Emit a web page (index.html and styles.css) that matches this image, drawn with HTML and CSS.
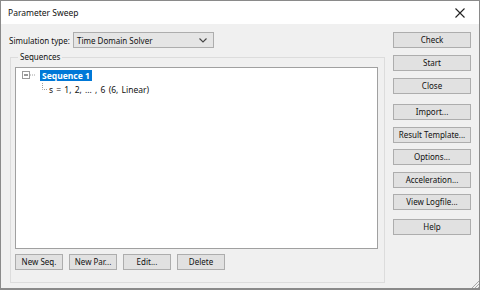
FILE: index.html
```html
<!DOCTYPE html>
<html>
<head>
<meta charset="utf-8">
<link rel="stylesheet" href="styles.css">
</head>
<body>
<div class="window">
  <div class="titlebar">
    <span class="title">Parameter Sweep</span>
    <svg class="close" width="10" height="10" viewBox="0 0 10 10"><path d="M0.5 0.5 L9.5 9.5 M9.5 0.5 L0.5 9.5" stroke="#222" stroke-width="1.1" fill="none"/></svg>
  </div>
  <div class="client">
    <div class="leftcol">
      <div class="simrow">
        <span class="label">Simulation type:</span>
        <div class="combo">
          <span>Time Domain Solver</span>
          <svg width="8" height="5" viewBox="0 0 8 5"><path d="M0.5 0.5 L4 4 L7.5 0.5" stroke="#444" stroke-width="1.1" fill="none"/></svg>
        </div>
      </div>
      <fieldset class="group">
        <legend>Sequences</legend>
        <div class="tree">
          <div class="node root">
            <svg class="expander" width="13" height="9" viewBox="0 0 13 9"><rect x="0.5" y="0.5" width="7" height="7" fill="#fff" stroke="#9a9a9a"/><path d="M2 4 H6" stroke="#333"/><path d="M8 4 H13" stroke="#a0a0a0" stroke-dasharray="1 1"/></svg>
            <span class="sel">Sequence 1</span>
          </div>
          <div class="node child">
            <svg class="branch" width="6" height="9" viewBox="0 0 6 9"><path d="M0.5 0 V6.5 H6" stroke="#a0a0a0" fill="none" stroke-dasharray="1 1"/></svg>
            <span class="childtext">s = 1, 2, ... , 6 (6, Linear)</span>
          </div>
        </div>
        <div class="bottombtns">
          <button class="btn">New Seq.</button>
          <button class="btn">New Par...</button>
          <button class="btn">Edit...</button>
          <button class="btn">Delete</button>
        </div>
      </fieldset>
    </div>
    <div class="rightcol">
      <div class="bgroup g1">
        <button class="btn">Check</button>
        <button class="btn">Start</button>
        <button class="btn">Close</button>
      </div>
      <div class="bgroup g2">
        <button class="btn">Import...</button>
        <button class="btn">Result Template...</button>
        <button class="btn">Options...</button>
        <button class="btn">Acceleration...</button>
        <button class="btn">View Logfile...</button>
      </div>
      <div class="bgroup g3">
        <button class="btn">Help</button>
      </div>
    </div>
    <svg class="grip" width="8" height="8" viewBox="0 0 8 8"><path d="M8 1 L1 8 M8 4 L4 8 M8 7 L7 8" stroke="#a8a8a8" stroke-width="1"/></svg>
  </div>
</div>
</body>
</html>
```
FILE: styles.css
```css
* { box-sizing: border-box; }
html, body { margin: 0; padding: 0; }
body {
  width: 480px;
  height: 290px;
  overflow: hidden;
  font-family: "Noto Sans", "Open Sans", sans-serif;
  font-size: 8px;
  color: #111;
  background: #f0f0f0;
}
.window {
  width: 480px;
  height: 290px;
  border: 1px solid #8a8a8a;
  border-bottom-width: 2px;
  display: flex;
  flex-direction: column;
  background: #f0f0f0;
}
.titlebar {
  height: 23px;
  background: #fff;
  display: flex;
  align-items: center;
  justify-content: space-between;
  padding: 0 14px 0 7px;
  flex: none;
}
.title { font-size: 8.5px; color: #111; }
.close { display: block; }
.client {
  flex: 1;
  display: flex;
  position: relative;
  padding: 8px 0 0 8px;
}
.leftcol {
  width: 376px;
  display: flex;
  flex-direction: column;
}
.simrow {
  display: flex;
  align-items: center;
  height: 16px;
}
.label { width: 64px; flex: none; white-space: nowrap; }
.combo {
  width: 141px;
  height: 16px;
  border: 1px solid #adadad;
  background: #e5e5e5;
  display: flex;
  align-items: center;
  justify-content: space-between;
  padding: 0 6px 0 3px;
  flex: none;
}
.group {
  margin: 3px 0 0 1px;
  border: 1px solid #dcdcdc;
  padding: 4px 6px 7px 4px;
  height: 232px;
  min-width: 0;
  display: flex;
  flex-direction: column;
}
.group legend {
  padding: 0 2px;
  margin-left: 3px;
  line-height: 12px;
}
.tree {
  height: 182px;
  background: #fff;
  border: 1px solid #a0a0a0;
  padding: 2px 0 0 6px;
  flex: none;
}
.node {
  display: flex;
  align-items: center;
  height: 11px;
  white-space: nowrap;
}
.expander { margin-right: 5px; flex: none; }
.sel {
  background: #0078d7;
  color: #fff;
  font-weight: bold;
  padding: 0 2px;
  line-height: 11px;
  font-size: 8.5px;
}
.child { padding-left: 20px; margin-top: 2px; height: 12px; align-items: flex-end; }
.branch { margin-right: 1px; flex: none; align-self: flex-start; }
.childtext { font-size: 8.5px; word-spacing: 1px; }
.bottombtns {
  display: flex;
  gap: 6px;
  margin-top: 5px;
}
.bottombtns .btn { width: 48px; }
.btn {
  font-family: inherit;
  font-size: 8px;
  color: #111;
  height: 16px;
  padding: 0;
  background: #e1e1e1;
  border: 1px solid #adadad;
  border-radius: 0;
  line-height: 14px;
  white-space: nowrap;
}
.rightcol {
  margin-left: 8px;
  width: 78px;
  display: flex;
  flex-direction: column;
}
.bgroup { display: flex; flex-direction: column; }
.g1 { gap: 7px; }
.g2 { gap: 6.5px; margin-top: 10px; }
.g3 { margin-top: 9px; }
.rightcol .btn { width: 78px; }
.grip { position: absolute; right: 0; bottom: 0; }
```
